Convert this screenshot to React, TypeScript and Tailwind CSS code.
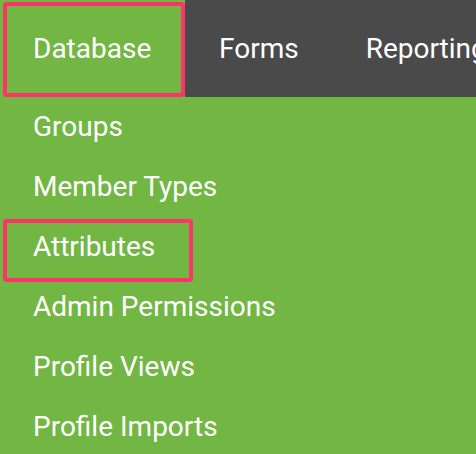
import React from 'react';

const NAV = ['Database', 'Forms', 'Reporting'];
const ITEMS = ['Groups', 'Member Types', 'Attributes', 'Admin Permissions', 'Profile Views', 'Profile Imports'];

export default function App() {
  return (
    <div
      className="h-[454px] w-[476px] overflow-hidden bg-[#72b743] text-white"
      style={{ fontFamily: 'Roboto, "Noto Sans", sans-serif' }}
    >
      <nav className="flex h-[97px] bg-[#4a4a4a] text-[28px]">
        {NAV.map((n, i) => (
          <div
            key={n}
            className={
              i === 0
                ? 'relative flex w-[185px] shrink-0 items-center bg-[#72b743] pl-[33px]'
                : 'flex shrink-0 items-center pl-[34px] pr-[33px] whitespace-nowrap'
            }
          >
            {n}
            {i === 0 && (
              <span className="absolute left-[3px] top-[2px] h-[95px] w-[182px] rounded-[3px] border-4 border-[#fe3468]" />
            )}
          </div>
        ))}
      </nav>
      <ul className="text-[28px]">
        {ITEMS.map((t) => (
          <li key={t} className="relative flex h-[60px] items-center pl-[33px]">
            {t}
            {t === 'Attributes' && (
              <span className="absolute left-[3px] top-[2px] h-[63px] w-[190px] rounded-[3px] border-4 border-[#fe3468]" />
            )}
          </li>
        ))}
      </ul>
    </div>
  );
}
